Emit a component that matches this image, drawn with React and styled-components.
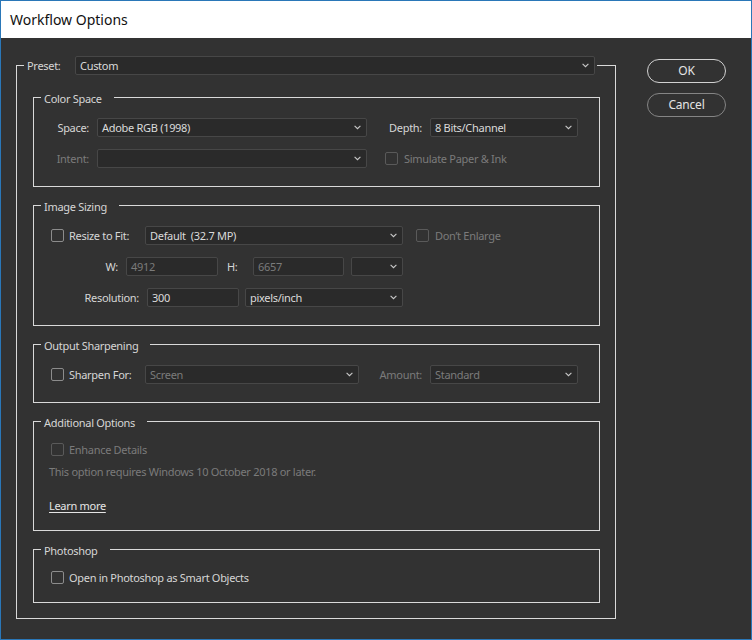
import React from "react";
import styled, { createGlobalStyle } from "styled-components";

const GlobalStyle = createGlobalStyle`
  *, *::before, *::after { box-sizing: border-box; }
  html, body { margin: 0; padding: 0; background: #323232; }
  body {
    font-family: "Noto Sans", "Segoe UI", sans-serif;
    font-size: 11px;
    letter-spacing: -0.3px;
    line-height: 16px;
    -webkit-font-smoothing: antialiased;
  }
`;

const TEXT = "#d6d6d6";
const DIM = "#7b7b7b";
const LINE = "#d9d9d9";

const Window = styled.div`
  width: 752px;
  height: 640px;
  border: 1px solid #2a77b8;
  background: #323232;
  display: flex;
  flex-direction: column;
  overflow: hidden;
`;

const TitleBar = styled.header`
  flex: 0 0 37px;
  background: #ffffff;
  display: flex;
  align-items: center;
  padding: 1px 0 0 9px;
  font-size: 14px;
  letter-spacing: 0;
  color: #111111;
`;

const Body = styled.div`
  flex: 1;
  display: flex;
  align-items: flex-start;
  padding: 18px 0 0 15px;
`;

const Group = styled.fieldset`
  margin: 0;
  padding: 0;
  min-width: 0;
  border: 1px solid ${LINE};
  width: ${(p) => (p.$w ? `${p.$w}px` : "auto")};
`;

/* Section caption: taller on top so the text sits just below the frame line */
const Legend = styled.legend`
  margin-left: 7px;
  padding: ${(p) => (p.$flat ? "0" : "4px")} ${(p) => p.$padR ?? 12}px 0 3px;
  color: ${TEXT};
  line-height: 16px;
  display: flex;
  align-items: center;
  white-space: nowrap;
`;

const Content = styled.div`
  display: flex;
  flex-direction: column;
  gap: ${(p) => p.$gap ?? 12}px;
  padding: ${(p) => p.$pad};
`;

const Row = styled.div`
  display: flex;
  align-items: center;
  height: 19px;
  padding-left: ${(p) => p.$pl ?? 0}px;
  margin-top: ${(p) => p.$mt ?? 0}px;
`;

const Label = styled.span`
  flex: none;
  width: ${(p) => (p.$w ? `${p.$w}px` : "auto")};
  text-align: ${(p) => (p.$right ? "right" : "left")};
  margin-left: ${(p) => p.$ml ?? 0}px;
  margin-right: ${(p) => p.$mr ?? 0}px;
  color: ${(p) => (p.$disabled ? DIM : TEXT)};
  white-space: nowrap;
`;

const Field = styled.div`
  flex: none;
  width: ${(p) => p.$w}px;
  height: 19px;
  margin-left: ${(p) => p.$ml ?? 0}px;
  background: #2a2a2a;
  border: 1px solid #474747;
  border-radius: 2px;
  display: flex;
  align-items: center;
  justify-content: space-between;
  padding: 0 5px 0 4px;
  color: ${(p) => (p.$disabled ? DIM : "#dadada")};
  white-space: nowrap;
  overflow: hidden;
`;

const Check = styled.span`
  flex: none;
  width: 13px;
  height: 13px;
  margin-left: ${(p) => p.$ml ?? 0}px;
  border: 1px solid ${(p) => (p.$disabled ? "#5a5a5a" : "#8c8c8c")};
  border-radius: 2px;
`;

const Note = styled.div`
  color: ${DIM};
  margin-top: ${(p) => p.$mt ?? 0}px;
`;

const Link = styled.a`
  color: #e6e6e6;
  text-decoration: underline;
  text-underline-offset: 2px;
  margin-top: ${(p) => p.$mt ?? 0}px;
  align-self: flex-start;
  cursor: pointer;
`;

const Buttons = styled.div`
  display: flex;
  flex-direction: column;
  gap: 10px;
  margin: 3px 0 0 31px;
`;

const Button = styled.button`
  width: 79px;
  height: 24px;
  border-radius: 12px;
  background: transparent;
  border: 1px solid ${(p) => (p.$primary ? "#d2d2d2" : "#858585")};
  color: #e4e4e4;
  font-family: inherit;
  font-size: 12px;
  letter-spacing: -0.2px;
  padding: 0;
  line-height: 20px;
`;

const Chevron = () => (
  <svg width="7" height="5" viewBox="0 0 7 5" style={{ flex: "none" }}>
    <polyline points="0.6,0.8 3.5,3.7 6.4,0.8" fill="none" stroke="#c9c9c9" strokeWidth="1.1" />
  </svg>
);

const Select = ({ w, ml, disabled, children }) => (
  <Field $w={w} $ml={ml} $disabled={disabled}>
    <span>{children}</span>
    <Chevron />
  </Field>
);

const Input = ({ w, ml, disabled, children }) => (
  <Field $w={w} $ml={ml} $disabled={disabled}>
    <span>{children}</span>
  </Field>
);

export default function App() {
  return (
    <>
      <GlobalStyle />
      <Window>
        <TitleBar>Workflow Options</TitleBar>
        <Body>
          <Group $w={600}>
            <Legend $flat $padR={2}>
              <Label $w={48}>Preset:</Label>
              <Select w={520}>Custom</Select>
            </Legend>
            <Content $gap={8} $pad="12px 15px 15px 16px">
              <Group>
                <Legend>Color Space</Legend>
                <Content $pad="11px 0 18px 0">
                  <Row>
                    <Label $w={55} $right $mr={8}>Space:</Label>
                    <Select w={270}>Adobe RGB (1998)</Select>
                    <Label $w={55} $right $mr={8}>Depth:</Label>
                    <Select w={148}>8 Bits/Channel</Select>
                  </Row>
                  <Row>
                    <Label $w={55} $right $mr={8} $disabled>Intent:</Label>
                    <Select w={270} disabled></Select>
                    <Check $ml={18} $disabled />
                    <Label $ml={6} $disabled>Simulate Paper &amp; Ink</Label>
                  </Row>
                </Content>
              </Group>

              <Group>
                <Legend>Image Sizing</Legend>
                <Content $pad="11px 0 18px 17px">
                  <Row>
                    <Check />
                    <Label $w={76} $ml={5}>Resize to Fit:</Label>
                    <Select w={258}>Default&nbsp; (32.7 MP)</Select>
                    <Check $ml={13} $disabled />
                    <Label $ml={6} $disabled>Don’t Enlarge</Label>
                  </Row>
                  <Row>
                    <Label $w={67} $right $mr={8}>W:</Label>
                    <Input w={92} disabled>4912</Input>
                    <Label $w={26} $ml={9}>H:</Label>
                    <Input w={91} disabled>6657</Input>
                    <Select w={52} ml={7} disabled></Select>
                  </Row>
                  <Row>
                    <Label $w={88} $right $mr={8}>Resolution:</Label>
                    <Input w={92}>300</Input>
                    <Select w={158} ml={6}>pixels/inch</Select>
                  </Row>
                </Content>
              </Group>

              <Group>
                <Legend>Output Sharpening</Legend>
                <Content $pad="11px 0 18px 17px">
                  <Row>
                    <Check />
                    <Label $w={76} $ml={5}>Sharpen For:</Label>
                    <Select w={214} disabled>Screen</Select>
                    <Label $w={63} $right $mr={8} $disabled>Amount:</Label>
                    <Select w={148} disabled>Standard</Select>
                  </Row>
                </Content>
              </Group>

              <Group>
                <Legend>Additional Options</Legend>
                <Content $gap={0} $pad="9px 0 16px 15px">
                  <Row $pl={2}>
                    <Check $disabled />
                    <Label $ml={5} $disabled>Enhance Details</Label>
                  </Row>
                  <Note $mt={5}>This option requires Windows 10 October 2018 or later.</Note>
                  <Link $mt={18}>Learn more</Link>
                </Content>
              </Group>

              <Group>
                <Legend>Photoshop</Legend>
                <Content $pad="9px 0 15px 17px">
                  <Row>
                    <Check />
                    <Label $ml={5}>Open in Photoshop as Smart Objects</Label>
                  </Row>
                </Content>
              </Group>
            </Content>
          </Group>

          <Buttons>
            <Button $primary>OK</Button>
            <Button>Cancel</Button>
          </Buttons>
        </Body>
      </Window>
    </>
  );
}
